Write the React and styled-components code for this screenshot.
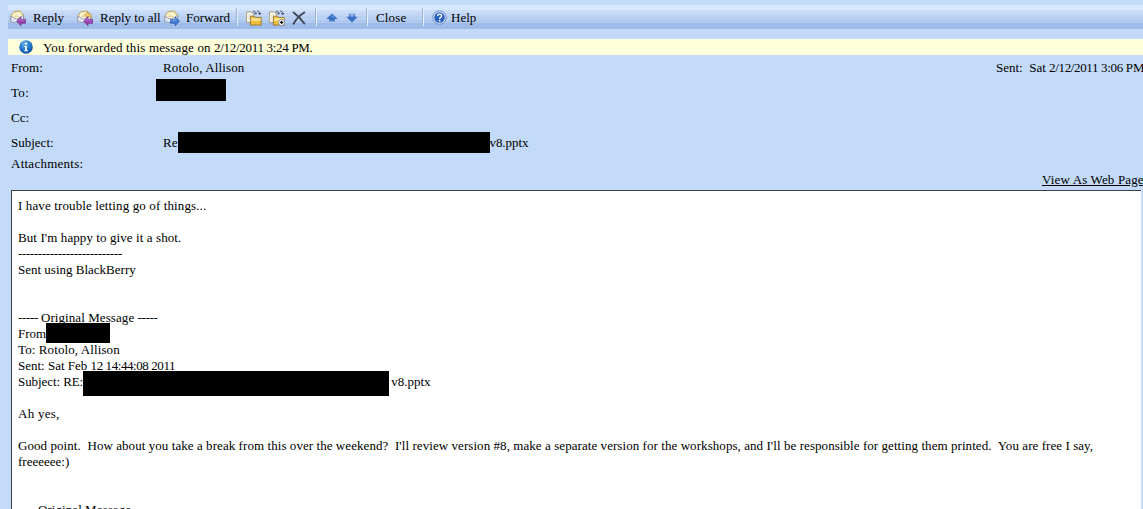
import React from 'react';
import styled, { createGlobalStyle } from 'styled-components';

const GlobalStyle = createGlobalStyle`
  * {
    box-sizing: border-box;
  }
  body {
    margin: 0;
    background: #c3daf9;
    color: #000;
    font: 13px/16px 'Liberation Serif', 'Times New Roman', serif;
    overflow: hidden;
  }
  svg {
    display: block;
    flex: none;
  }
`;

const Window = styled.div`
  width: 1143px;
  height: 509px;
  padding: 5px 0 0 8px;
  display: flex;
  flex-direction: column;
  overflow: hidden;
`;

const Toolbar = styled.div`
  height: 24px;
  flex: none;
  display: flex;
  align-items: center;
  background: linear-gradient(
    #d7e7fd 0 5px,
    #c9dcf8 5px 8px,
    #c1d6f5 8px 11px,
    #b9d0f3 11px 15px,
    #b0c9f0 15px 18px,
    #9fbce9 18px 24px
  );
`;

const ToolGroup = styled.div`
  width: ${({ $width }) => $width}px;
  height: 24px;
  flex: none;
  display: flex;
  align-items: center;
  gap: ${({ $gap = 7 }) => $gap}px;
  padding: 1px 0 0 ${({ $pad = 0 }) => $pad}px;
  white-space: nowrap;
`;

const Divider = styled.div`
  width: 2px;
  height: 18px;
  flex: none;
  background: #9ab4dc;
  border-right: 1px solid #e5effd;
`;

const Text = styled.span`
  letter-spacing: ${({ $track = 0 }) => $track}px;
  white-space: pre;
`;

const Digits = styled(Text)`
  letter-spacing: ${({ $track = -0.42 }) => $track}px;
`;

const Dashes = styled(Text)`
  letter-spacing: -0.33px;
`;

const InfoBar = styled.div`
  height: 16px;
  flex: none;
  margin-top: 10px;
  padding: 1px 0 0 11px;
  display: flex;
  align-items: center;
  background: #ffffdc;

  svg {
    margin: -1px 10px 0 0;
  }
`;

const Headers = styled.div`
  height: 135px;
  flex: none;
  padding-left: 3px;
`;

const HeaderRow = styled.div`
  height: ${({ $height = 25 }) => $height}px;
  display: grid;
  grid-template-columns: 152px 1fr 147px;
  align-items: center;
`;

const HeaderValue = styled.div`
  display: flex;
  align-items: center;
  white-space: nowrap;
`;

const WebPageLink = styled.div`
  height: 16px;
  margin-left: 1031px;
  text-decoration: underline;
  white-space: nowrap;
`;

const Redaction = styled.span`
  position: relative;
  flex: none;
  width: ${({ $width }) => $width}px;
  height: ${({ $height }) => $height}px;
  margin: ${({ $margin = '0' }) => $margin};
  background: #000;
`;

const MessageBody = styled.div`
  flex: 1;
  min-height: 0;
  margin: 0 2px 0 3px;
  padding: 7px 0 0 6px;
  background: #fff;
  border: 1px solid #3c4048;
  border-width: 1px 0 0 1px;
  overflow: hidden;
`;

const Line = styled.div`
  height: 16px;
  display: flex;
  align-items: flex-start;
  white-space: nowrap;
`;

const Envelope = () => (
  <>
    <path d="M.8 6.2 3.6 2 9.8.8l3.9 4.4v6.3H.8z" fill="#f8e7a4" stroke="#b49c62" strokeWidth=".9" />
    <path d="M3.1 7V3.7l6.2-1.3 2.2 3.8-4 2.8z" fill="#fffbe2" />
    <path d="M4.3 5h4M4.3 6.5h5" stroke="#e0c77a" strokeWidth=".8" />
    <path d="M.9 6.3 7 9.4l6.5-4v6.8H.9z" fill="#f4f6fb" stroke="#8493b5" strokeWidth=".9" />
    <path d="M1 12l4.2-3.5" stroke="#aab5cd" strokeWidth=".8" />
  </>
);

const ReplyIcon = ({ all }) => (
  <svg width="16" height="16" viewBox="0 0 16 16">
    <Envelope />
    {all && (
      <path d="M7.5 4.8 11 1.8v1.6c2.4 0 3.8 1.4 3.8 4.4L11 6.3v1.6z" fill="#f3cc72" stroke="#b08a3c" strokeWidth=".6" />
    )}
    <path d="M6.6 11 11 6.8v2.5h4.5v4H11v2.4z" fill="#9b45b0" stroke="#74288a" strokeWidth=".7" />
    <path d="M8 10.8 10.3 8.7v1.4h4.5" fill="none" stroke="#c78ad6" strokeWidth=".7" />
  </svg>
);

const ForwardIcon = () => (
  <svg width="16" height="16" viewBox="0 0 16 16">
    <Envelope />
    <path d="M15.6 11.2 11.2 7v2.4H6.5v3.8h4.7v2.5z" fill="#447ddb" stroke="#2453a8" strokeWidth=".7" />
    <path d="M7.2 10.2h4.7V8.7" fill="none" stroke="#91b7f4" strokeWidth=".7" />
  </svg>
);

const FolderIcon = ({ copy }) => (
  <svg width="16" height="16" viewBox="0 0 16 16">
    <path d="M.6 2h4.8l2 2v8.3H.6z" fill="#fffdf4" stroke="#a08a58" strokeWidth=".8" />
    <path d="M2 5h3.5M2 7h2.5M2 9h2" stroke="#cfc8b0" strokeWidth=".8" />
    <path d="M6.6 2.4C7.4.6 9.4.6 9.6 3.4M8.1 2.7l1.5 1.6 1.2-1.8M11.2 1.2c1.8-.3 2.6.7 2.6 3M12.4 3l1.4 1.7L15.2 3" fill="none" stroke="#333f55" strokeWidth=".9" />
    <path d="M4.4 6.2h3.8l1 1.2h6v7.7H4.4z" fill="#efbf3c" stroke="#8e6c24" strokeWidth=".8" />
    <path d="M5.1 8.2h9.5v2.6H5.1z" fill="#fde68e" />
    {copy && (
      <>
        <circle cx="12.6" cy="12.4" r="3.1" fill="#fff" stroke="#6b7280" strokeWidth=".7" />
        <path d="M12.6 10.7v3.4M10.9 12.4h3.4" stroke="#111" strokeWidth="1.3" />
      </>
    )}
  </svg>
);

const DeleteIcon = () => (
  <svg width="14" height="14" viewBox="0 0 14 14">
    <path d="M1.6 1.5C5 4 9.5 8.6 12.3 12.5M12.3 1.5C8 4 4 8.5 1.6 12.7" fill="none" stroke="#3e4654" strokeWidth="1.9" strokeLinecap="round" />
  </svg>
);

const ArrowIcon = ({ down }) => (
  <svg width="12" height="10" viewBox="0 0 12 10">
    {down ? (
      <>
        <path d="M3.2 .8h5.6v3h3L6 9.4.2 3.8h3z" fill="#3a6fc6" />
        <path d="M3.2 .8h5.6L6 4.6z" fill="#8fb4ec" />
      </>
    ) : (
      <>
        <path d="M6 .4 11.8 6h-3v3H3.2V6h-3z" fill="#3a6fc6" />
        <path d="M6 1.6 9 4.8 6 4z" fill="#75a0e4" />
        <path d="M3.4 7.6h5.2V9H3.4z" fill="#7aa3e2" />
      </>
    )}
  </svg>
);

const HelpIcon = () => (
  <svg width="15" height="15" viewBox="0 0 15 15">
    <circle cx="7.5" cy="7.5" r="6.7" fill="#e5eefb" stroke="#5c83c4" strokeWidth=".9" />
    <circle cx="7.5" cy="7.5" r="5.3" fill="#2a60bd" />
    <path d="M5.6 6.1c0-2.7 4-2.5 4-.2 0 1.5-2 1.5-2 3" fill="none" stroke="#fff" strokeWidth="1.4" />
    <circle cx="7.6" cy="10.7" r=".85" fill="#fff" />
  </svg>
);

const InfoIcon = () => (
  <svg width="14" height="14" viewBox="0 0 14 14">
    <defs>
      <radialGradient id="info" cx="40%" cy="28%" r="75%">
        <stop offset="0" stopColor="#6ab4ee" />
        <stop offset=".55" stopColor="#2078cc" />
        <stop offset="1" stopColor="#0d4d9c" />
      </radialGradient>
    </defs>
    <circle cx="7" cy="7" r="6.8" fill="url(#info)" />
    <circle cx="7" cy="3.6" r="1.2" fill="#fff" />
    <path d="M5.3 6h2.6v4.2h1v1.1H5.2v-1.1h1V7h-.9z" fill="#fff" />
  </svg>
);

const App = () => (
  <>
    <GlobalStyle />
    <Window>
      <Toolbar>
        <ToolGroup $width={69} $pad={2}>
          <ReplyIcon />
          <Text>Reply</Text>
        </ToolGroup>
        <ToolGroup $width={87}>
          <ReplyIcon all />
          <Text>Reply to all</Text>
        </ToolGroup>
        <ToolGroup $width={72} $gap={6}>
          <ForwardIcon />
          <Text>Forward</Text>
        </ToolGroup>
        <Divider />
        <ToolGroup $width={77} $pad={8}>
          <FolderIcon />
          <FolderIcon copy />
          <DeleteIcon />
        </ToolGroup>
        <Divider />
        <ToolGroup $width={49} $pad={9} $gap={8}>
          <ArrowIcon />
          <ArrowIcon down />
        </ToolGroup>
        <Divider />
        <ToolGroup $width={54} $pad={8}>
          <Text $track={0.15}>Close</Text>
        </ToolGroup>
        <Divider />
        <ToolGroup $width={80} $pad={8} $gap={4}>
          <HelpIcon />
          <Text>Help</Text>
        </ToolGroup>
      </Toolbar>
      <InfoBar>
        <InfoIcon />
        <Text $track={0.15}>You forwarded this message on </Text>
        <Digits $track={-0.3}>2/12/2011 3:24 PM.</Digits>
      </InfoBar>
      <Headers>
        <HeaderRow>
          <Text>From:</Text>
          <Text $track={0.13}>Rotolo, Allison</Text>
          <HeaderValue>
            <Text>Sent:  Sat </Text>
            <Digits $track={-0.35}>2/12/2011 3:06 </Digits>
            <Text>PM</Text>
          </HeaderValue>
        </HeaderRow>
        <HeaderRow>
          <Text $track={0.3}>To:</Text>
          <HeaderValue>
            <Redaction $width={70} $height={22} $margin="-6px 0 0 -7px" />
          </HeaderValue>
        </HeaderRow>
        <HeaderRow>
          <Text>Cc:</Text>
        </HeaderRow>
        <HeaderRow>
          <Text>Subject:</Text>
          <HeaderValue>
            <Text>Re</Text>
            <Redaction $width={312} $height={21} $margin="0 -1px 0 1px" />
            <Text $track={-0.05}>v8.pptx</Text>
          </HeaderValue>
        </HeaderRow>
        <HeaderRow $height={17}>
          <Text $track={0.25}>Attachments:</Text>
        </HeaderRow>
        <WebPageLink>
          <Text $track={0.15}>View As Web Page</Text>
        </WebPageLink>
      </Headers>
      <MessageBody>
        <Line><Text $track={0.12}>I have trouble letting go of things...</Text></Line>
        <Line />
        <Line><Text $track={0.09}>But I'm happy to give it a shot.</Text></Line>
        <Line><Dashes>--------------------------</Dashes></Line>
        <Line><Text>Sent using BlackBerry</Text></Line>
        <Line />
        <Line />
        <Line>
          <Dashes>----- </Dashes>
          <Text $track={0.08}>Original Message </Text>
          <Dashes>-----</Dashes>
        </Line>
        <Line>
          <Text>From</Text>
          <Redaction $width={64} $height={20} $margin="-3px 0 0" />
        </Line>
        <Line><Text $track={0.1}>To: Rotolo, Allison</Text></Line>
        <Line>
          <Text>Sent: Sat Feb </Text>
          <Digits>12 14:44:08 2011</Digits>
        </Line>
        <Line>
          <Text $track={-0.08}>Subject: RE:</Text>
          <Redaction $width={306} $height={25} $margin="-3px 2px 0 0" />
          <Text>v8.pptx</Text>
        </Line>
        <Line />
        <Line><Text $track={0.25}>Ah yes,</Text></Line>
        <Line />
        <Line>
          <Text $track={0.064}>
            Good point.  How about you take a break from this over the weekend?  I'll review version #8, make a separate version for the workshops, and I'll be responsible for getting them printed.  You are free I say,
          </Text>
        </Line>
        <Line><Text>freeeeee:)</Text></Line>
        <Line />
        <Line />
        <Line>
          <Dashes>-----</Dashes>
          <Text $track={0.06}>Original Message</Text>
          <Dashes>-----</Dashes>
        </Line>
      </MessageBody>
    </Window>
  </>
);

export default App;
